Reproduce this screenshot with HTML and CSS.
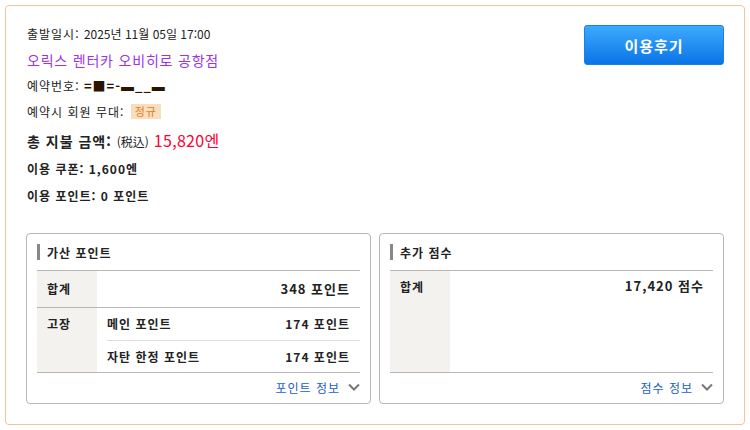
FILE: index.html
```html
<!DOCTYPE html>
<html lang="ko">
<head>
<meta charset="utf-8">
<link rel="stylesheet" href="styles.css">
</head>
<body>
<div class="card">
  <div class="top">
    <div class="info">
      <div class="row">출발일시: <span class="date">2025년 11월 05일 17:00</span></div>
      <div class="row shop">오릭스 렌터카 오비히로 공항점</div>
      <div class="row">예약번호: <span class="mask">=■=-▬__▬</span></div>
      <div class="row">예약시 회원 무대: <span class="badge">정규</span></div>
      <div class="row total">총 지불 금액: <span class="tax">(税込)</span> <span class="amount">15,820엔</span></div>
      <div class="row strong">이용 쿠폰: 1,600엔</div>
      <div class="row strong">이용 포인트: 0 포인트</div>
    </div>
    <button class="review">이용후기</button>
  </div>
  <div class="panels">
    <div class="panel">
      <div class="phead"><span class="bar"></span>가산 포인트</div>
      <div class="ptable">
        <div class="prow">
          <div class="plabel">합계</div>
          <div class="pval big">348 포인트</div>
        </div>
        <div class="prow">
          <div class="plabel">고장</div>
          <div class="psubs">
            <div class="psub"><span>메인 포인트</span><span>174 포인트</span></div>
            <div class="psub"><span>자탄 한정 포인트</span><span>174 포인트</span></div>
          </div>
        </div>
      </div>
      <div class="pfoot"><span class="link">포인트 정보</span><svg class="chev" width="12" height="8" viewBox="0 0 12 8"><path d="M1 1.5 L6 6.5 L11 1.5" fill="none" stroke="#777" stroke-width="2"/></svg></div>
    </div>
    <div class="panel">
      <div class="phead"><span class="bar"></span>추가 점수</div>
      <div class="ptable">
        <div class="prow fill">
          <div class="plabel">합계</div>
          <div class="pval big">17,420 점수</div>
        </div>
      </div>
      <div class="pfoot"><span class="link">점수 정보</span><svg class="chev" width="12" height="8" viewBox="0 0 12 8"><path d="M1 1.5 L6 6.5 L11 1.5" fill="none" stroke="#777" stroke-width="2"/></svg></div>
    </div>
  </div>
</div>
</body>
</html>
```
FILE: styles.css
```css
* { box-sizing: border-box; }
body {
  margin: 0;
  background: #fff;
  font-family: "Noto Sans CJK KR", "Noto Sans", sans-serif;
  color: #222;
  font-size: 12px;
  letter-spacing: 1px;
}
.card {
  margin: 5px;
  width: 740px;
  height: 420px;
  border: 1px solid #f3c3a0;
  border-radius: 4px;
  padding: 15px 20px 0 20px;
}
.top {
  display: flex;
  justify-content: space-between;
  align-items: flex-start;
}
.info { padding-left: 1px; }
.row {
  height: 26px;
  line-height: 26px;
  font-size: 12px;
  white-space: nowrap;
}
.date { font-size: 12px; letter-spacing: 0; }
.shop { color: #9933ee; font-size: 14px; letter-spacing: 0.8px; }
.mask { font-weight: bold; font-size: 13px; letter-spacing: 1px; color: #2a1400; }
.badge {
  display: inline-block;
  background: #f7dfbd;
  color: #e8782a;
  font-size: 11px;
  line-height: 15px;
  height: 15px;
  padding: 0 4px;
  margin-left: 2px;
  vertical-align: 1px;
}
.total {
  height: 30px;
  line-height: 30px;
  font-size: 14px;
  font-weight: bold;
}
.tax { font-size: 12px; font-weight: normal; letter-spacing: 0; }
.amount { color: #ff0033; font-size: 16px; font-weight: normal; letter-spacing: 0.3px; }
.strong { font-weight: bold; height: 27px; line-height: 27px; }
.review {
  margin-top: 4px;
  width: 140px;
  height: 40px;
  border: 1px solid #1a80e8;
  border-radius: 3px;
  background: linear-gradient(#3daaff, #0a74e6);
  color: #fff;
  font-family: "Noto Sans CJK KR", sans-serif;
  font-size: 15px;
  font-weight: bold;
  letter-spacing: 1px;
}
.panels {
  margin-top: 24px;
  display: grid;
  grid-template-columns: 345px 345px;
  gap: 8px;
}
.panel {
  border: 1px solid #bbb6b2;
  border-radius: 4px;
  padding: 0 10px;
  display: flex;
  flex-direction: column;
  height: 171px;
}
.phead {
  height: 36px;
  display: flex;
  align-items: center;
  font-weight: bold;
  font-size: 12px;
}
.bar {
  width: 3px;
  height: 16px;
  background: #888;
  margin-right: 7px;
}
.ptable {
  border-top: 1px solid #bbb6b2;
  border-bottom: 1px solid #bbb6b2;
  flex: 1;
  display: flex;
  flex-direction: column;
}
.prow {
  display: flex;
}
.prow + .prow { border-top: 1px solid #bbb6b2; }
.prow.fill { flex: 1; }
.plabel {
  width: 60px;
  background: #f4f2ee;
  padding: 0 10px;
  line-height: 36px;
  font-weight: bold;
}
.prow:first-child .plabel { height: 36px; }
.prow.fill .plabel { height: auto; line-height: 32px; }
.pval {
  flex: 1;
  text-align: right;
  padding-right: 10px;
  line-height: 36px;
}
.prow.fill .pval { line-height: 30px; padding-right: 9px; }
.big { font-size: 13px; font-weight: bold; }
.psubs { flex: 1; padding-left: 10px; }
.psub {
  display: flex;
  justify-content: space-between;
  height: 32px;
  line-height: 32px;
  padding-right: 10px;
  font-weight: bold;
}
.psub + .psub { border-top: 1px solid #ddd; }
.prow:nth-child(2) .plabel { line-height: 32px; }
.pfoot {
  height: 30px;
  display: flex;
  justify-content: flex-end;
  align-items: center;
  padding-bottom: 2px;
}
.link { color: #2060cc; font-size: 12px; }
.chev { margin-left: 8px; margin-right: 0; }
```
